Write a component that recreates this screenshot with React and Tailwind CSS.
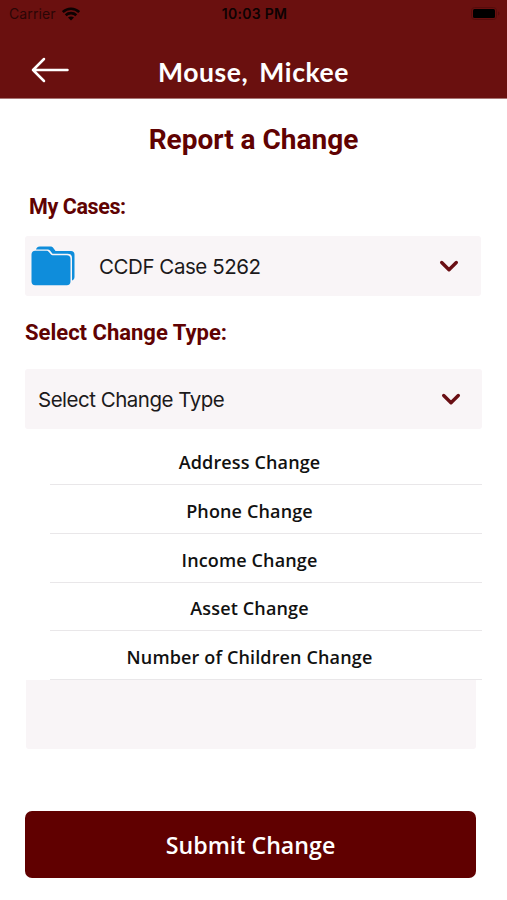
import React, { useState } from 'react';
import clsx from 'clsx';

const changeTypes = [
  'Address Change',
  'Phone Change',
  'Income Change',
  'Asset Change',
  'Number of Children Change',
];

function WifiIcon() {
  return (
    <svg width="18" height="14" viewBox="0 0 18 14" fill="none" stroke="#0d0202" strokeWidth="2.6">
      <path d="M.8 5.100C5.400.6 12.600.6 17.200 5.100" />
      <path d="M3.700 8.200c2.900-2.800 7.700-2.800 10.600 0" />
      <path d="M6 10.500c1.700-1.500 4.300-1.500 6 0l-3 3z" fill="#0d0202" stroke="none" />
    </svg>
  );
}

function BatteryIcon() {
  return (
    <svg width="29" height="13" viewBox="0 0 29 13">
      <rect x="0.5" y="0.5" width="25" height="12" rx="3" fill="none" stroke="#560c0c" />
      <rect x="2" y="2" width="22" height="9" rx="1.5" fill="#000" />
      <path d="M27 4.500v4c1-.4 1.500-1.100 1.500-2s-.5-1.600-1.500-2z" fill="#560c0c" />
    </svg>
  );
}

function BackArrow() {
  return (
    <svg width="38" height="26" viewBox="0 0 38 26" fill="none" stroke="#fff" strokeWidth="2.5" strokeLinecap="round" strokeLinejoin="round">
      <path d="M36.500 13H2M13 2 2 13l11 11" />
    </svg>
  );
}

function FolderIcon() {
  return (
    <svg width="44" height="40" viewBox="0 0 44 40" fill="#0f8ddb">
      <path d="M5 4.500C5 2 6.500.500 9 .500h10.500c1.200 0 2.200.500 2.800 1.500L24.500 5H40c2.200 0 3.500 1.300 3.500 3.500V31c0 1.800-1 3-2.500 3.400V12c0-2.800-1.500-4.300-4.300-4.300H21.500L19 4.500c-.6-.7-1.300-1-2.200-1H5z" />
      <path d="M.500 8.500C.500 6 2 4.700 4.200 4.700h11c1.200 0 2 .3 2.700 1.200L20 8.600c.4.500.9.700 1.500.7h14.300c2.400 0 3.700 1.300 3.700 3.700v22.500c0 2.400-1.300 3.700-3.700 3.700H4.200C1.800 39.200.500 37.900.500 35.500z" />
    </svg>
  );
}

function Chevron() {
  return (
    <svg width="20" height="13" viewBox="0 0 20 13" fill="none" stroke="#6a0f14" strokeWidth="3.400" strokeLinecap="round" strokeLinejoin="round">
      <path d="m2.700 2.500 7.300 7.300 7.300-7.300" />
    </svg>
  );
}

export default function App() {
  const [selected, setSelected] = useState('Select Change Type');

  return (
    <div className="w-[507px] h-[900px] bg-white flex flex-col overflow-hidden">
      <header className="h-[99px] shrink-0 bg-[#6a100f] border-b border-[#a87574]">
        {/* Status bar */}
        <div className="h-[27px] grid grid-cols-3 items-center pl-[9px] pr-[7px] text-[#0d0202] font-['Inter'] text-[14px]">
          <div className="flex items-center gap-[6px]">
            <span className="tracking-[0.1px] text-[#2a0606]">Carrier</span>
            <WifiIcon />
          </div>
          <span className="text-center font-semibold tracking-[0.3px]">10:03 PM</span>
          <div className="flex justify-end">
            <BatteryIcon />
          </div>
        </div>

        {/* Title bar */}
        <div className="relative h-[70px] flex items-center justify-center pt-[19px]">
          <button className="absolute left-[31px] top-[30px]" aria-label="Back">
            <BackArrow />
          </button>
          <h1 className="text-white font-['Lato'] font-bold text-[26.5px] leading-8 tracking-[0.6px] [word-spacing:4px]">
            Mouse, Mickee
          </h1>
        </div>
      </header>

      <main className="flex flex-col pl-[25px]">
        <h2 className="mt-[23px] pr-[25px] text-center font-['Roboto'] font-bold text-[28px] leading-9 text-[#600202]">
          Report a Change
        </h2>

        <div className="mt-[37px] pl-1 font-['Roboto'] font-bold text-[21.5px] tracking-[-0.4px] leading-6 text-[#600202]">
          My Cases:
        </div>
        <button className="mt-[17px] w-[456px] h-[60px] rounded-[3px] bg-[#f9f5f7] flex items-center pl-[6px] pr-[22px]">
          <FolderIcon />
          <span className="ml-6 pt-[3px] flex-1 text-left font-['Inter'] text-[20.5px] tracking-[-0.45px] text-[#1c1a1b]">CCDF Case 5262</span>
          <Chevron />
        </button>

        <div className="mt-[25px] font-['Roboto'] font-bold text-[22px] leading-6 text-[#600202]">Select Change Type:</div>
        <button className="mt-6 w-[457px] h-[60px] rounded-[3px] bg-[#f9f5f7] flex items-center pl-[13px] pr-[21px]">
          <span className="pt-[3px] flex-1 text-left font-['Inter'] text-[20.5px] tracking-[-0.5px] text-[#1c1a1b]">{selected}</span>
          <Chevron />
        </button>

        {/* Options */}
        <ul className="mt-[7px] w-[457px]">
          {changeTypes.map((type, i) => (
            <li
              key={type}
              onClick={() => setSelected(type)}
              className={clsx(
                'ml-[25px] border-b border-[#e9e7e9] flex items-center justify-center pr-[33px] cursor-pointer',
                "font-['Open_Sans'] font-semibold text-[18px] tracking-[0.14px] text-[#111]",
                i % 4 === 0 ? 'h-[49px]' : 'h-[48.750px]'
              )}
            >
              <span className="pt-[5px] whitespace-nowrap">{type}</span>
            </li>
          ))}
        </ul>
        <div className="ml-px w-[450px] h-[69px] rounded-b-[3px] bg-[#f9f5f7]" />

        <button className="mt-[62px] w-[451px] h-[67px] pt-[2px] rounded-[7px] bg-[#600000] text-white font-['Open_Sans'] font-semibold text-[23.200px]">
          Submit Change
        </button>
      </main>
    </div>
  );
}
